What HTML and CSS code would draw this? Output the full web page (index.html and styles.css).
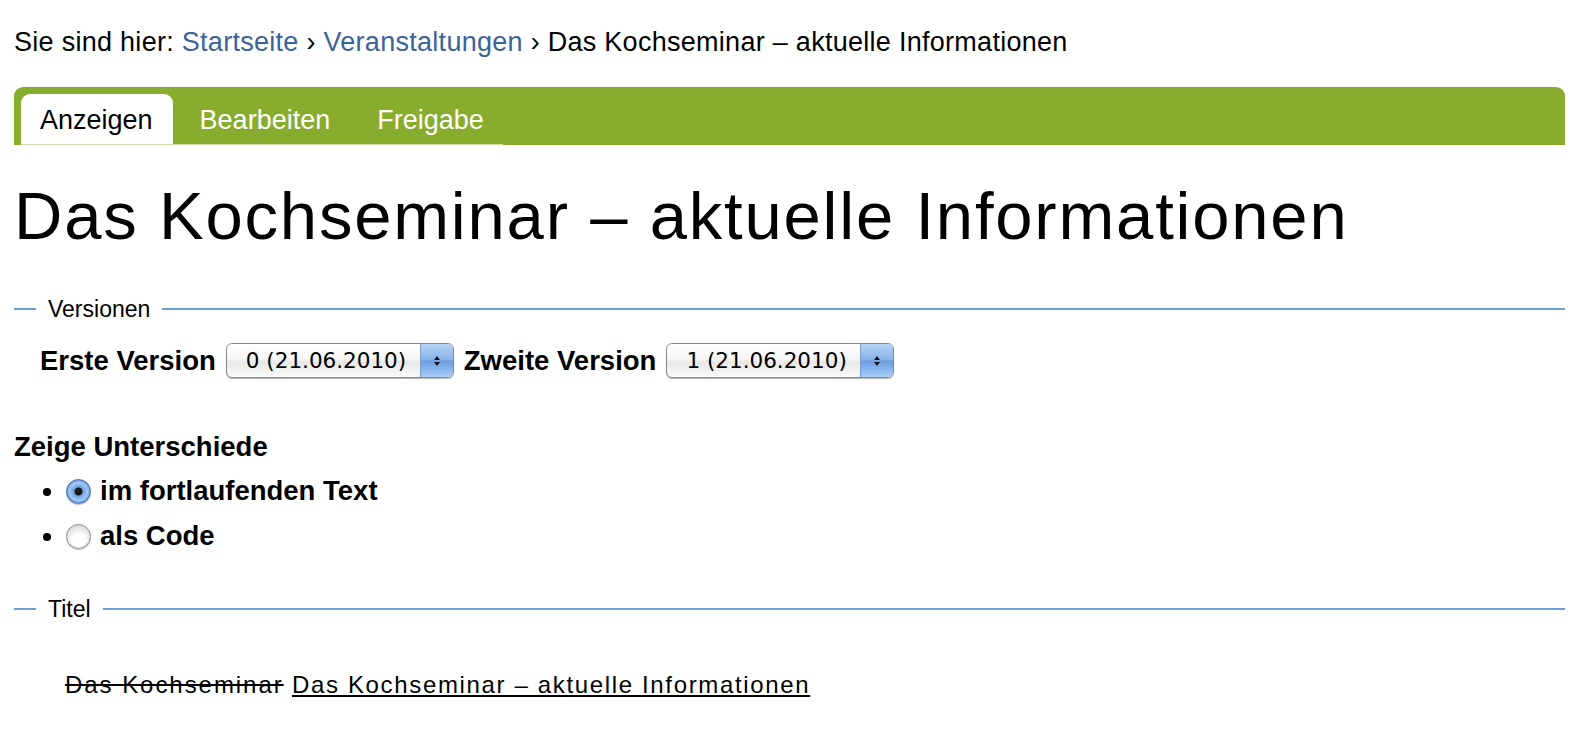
FILE: index.html
```html
<!DOCTYPE html>
<html lang="de">
<head>
<meta charset="utf-8">
<title>Das Kochseminar – aktuelle Informationen</title>
<link rel="stylesheet" href="styles.css">
</head>
<body>
<div class="page">
  <p class="breadcrumb">Sie sind hier: <a href="#">Startseite</a> › <a href="#">Veranstaltungen</a> › Das Kochseminar – aktuelle Informationen</p>

  <nav class="tabbar">
    <ul class="tabs">
      <li class="tab active">Anzeigen</li>
      <li class="tab">Bearbeiten</li>
      <li class="tab">Freigabe</li>
    </ul>
  </nav>

  <h1 class="title">Das Kochseminar – aktuelle Informationen</h1>

  <fieldset class="group">
    <legend>Versionen</legend>
    <div class="versions">
      <label class="vlabel">Erste Version</label>
      <span class="select">
        <span class="select-text">0 (21.06.2010)</span>
        <span class="select-btn"><svg width="10" height="16" viewBox="0 0 10 16"><path d="M5 3 L8 7 H2 Z M5 13 L8 9 H2 Z" fill="#111"/></svg></span>
      </span>
      <label class="vlabel">Zweite Version</label>
      <span class="select">
        <span class="select-text">1 (21.06.2010)</span>
        <span class="select-btn"><svg width="10" height="16" viewBox="0 0 10 16"><path d="M5 3 L8 7 H2 Z M5 13 L8 9 H2 Z" fill="#111"/></svg></span>
      </span>
    </div>
  </fieldset>

  <div class="diffmode">
    <div class="dm-title">Zeige Unterschiede</div>
    <ul class="dm-list">
      <li><span class="radio checked"></span>im fortlaufenden Text</li>
      <li><span class="radio"></span>als Code</li>
    </ul>
  </div>

  <fieldset class="group group-title">
    <legend>Titel</legend>
    <p class="diff"><del>Das Kochseminar</del> <ins>Das Kochseminar – aktuelle Informationen</ins></p>
  </fieldset>
</div>
</body>
</html>
```
FILE: styles.css
```css
html, body {
  margin: 0;
  padding: 0;
  background: #fff;
}
body {
  font-family: "Liberation Sans", Arial, Helvetica, sans-serif;
  color: #000;
}
.page {
  padding: 0 25px 0 14px;
}
.breadcrumb {
  margin: 0;
  padding-top: 26px;
  font-size: 27px;
  line-height: 32px;
  letter-spacing: 0.28px;
  white-space: nowrap;
}
.breadcrumb a {
  color: #3b6399;
  text-decoration: none;
}
.tabbar {
  margin-top: 29px;
  height: 58px;
  background: #88ac2e;
  border-radius: 9px 9px 0 0;
  display: flex;
  align-items: flex-end;
}
.tabs {
  list-style: none;
  margin: 0 0 0 7px;
  padding: 0;
  display: flex;
  border-bottom: 1px solid #cfe0a6;
  width: 482px;
}
.tab {
  font-size: 27px;
  color: #fff;
  height: 50px;
  line-height: 52px;
  padding: 0 24px 0 23px;
}
.tab.active {
  background: #fff;
  color: #000;
  border-radius: 9px 9px 0 0;
  padding: 0 20px 0 19px;
  margin-right: 4px;
}
.title {
  margin: 31px 0 0 0;
  font-weight: normal;
  font-size: 67px;
  line-height: 80px;
  letter-spacing: 1.8px;
  white-space: nowrap;
}
.group {
  border: 0;
  border-top: 2px solid #6a9fd8;
  margin: 40px 0 0 0;
  padding: 0;
  min-width: 0;
}
.group legend {
  font-size: 23px;
  line-height: 26px;
  padding: 0 12px;
  margin-left: 22px;
}
.versions {
  display: flex;
  align-items: center;
  gap: 10px;
  padding: 21px 0 0 26px;
}
.vlabel {
  font-weight: bold;
  font-size: 27.5px;
  white-space: nowrap;
}
.select {
  display: inline-flex;
  height: 35px;
  width: 228px;
  box-sizing: border-box;
  border: 1px solid #8a8a8a;
  border-radius: 6px;
  overflow: hidden;
  background: linear-gradient(#ffffff, #f6f6f6 45%, #e8e8e8 55%, #fafafa);
  box-shadow: 0 1px 1px rgba(0,0,0,0.3);
  font-family: "DejaVu Sans", sans-serif;
}
.select-text {
  flex: 1;
  font-size: 21.5px;
  line-height: 33px;
  padding: 0 0 0 19px;
  white-space: nowrap;
}
.select-btn {
  width: 32px;
  display: flex;
  align-items: center;
  justify-content: center;
  background: linear-gradient(#b7d3f5, #86b2ea 48%, #6a9de2 52%, #a8cdf6);
  border-left: 1px solid #7d9ccc;
}
.diffmode {
  margin-top: 53px;
}
.dm-title {
  font-weight: bold;
  font-size: 27.5px;
  line-height: 32px;
}
.dm-list {
  margin: 4.5px 0 0 0;
  padding-left: 52px;
  font-weight: bold;
  font-size: 27.5px;
  line-height: 45.5px;
}
.radio {
  display: inline-block;
  width: 25px;
  height: 25px;
  border-radius: 50%;
  box-sizing: border-box;
  vertical-align: -4px;
  margin-right: 9px;
  border: 1px solid #8f8f8f;
  background: radial-gradient(circle at 50% 65%, #ffffff 30%, #dedede 75%, #bdbdbd);
  box-shadow: 0 1px 1px rgba(0,0,0,0.25);
}
.radio.checked {
  border-color: #4a6fa8;
  background: radial-gradient(circle at 50% 50%, #1a1a1a 0, #1a1a1a 3.5px, #6fa0e6 4.5px, #a6c8f4 9px, #5c90dc 12px);
}
.group-title {
  margin-top: 37.5px;
}
.diff {
  margin: 47px 0 0 51px;
  font-size: 24px;
  line-height: 32px;
  letter-spacing: 1.65px;
  white-space: nowrap;
}
.diff del {
  text-decoration: line-through;
  letter-spacing: 1.95px;
}
.diff ins {
  text-decoration: underline;
}
```
